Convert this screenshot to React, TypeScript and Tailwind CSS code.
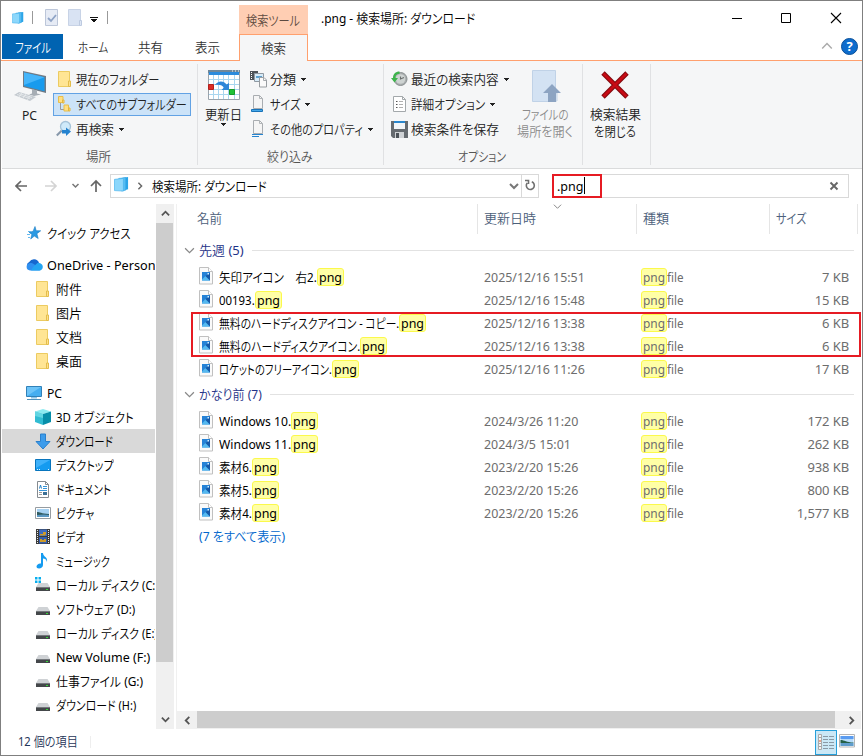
import { useLayoutEffect, useRef, useState } from 'react';
import type { ReactNode } from 'react';

interface FitProps {
    w: number;
    children: string;
    className?: string;
}

// Condenses a label horizontally so that it fills exactly w pixels
function Fit({ w, children, className = '' }: FitProps) {
    const ref = useRef<HTMLSpanElement>(null);
    const [scale, setScale] = useState(1);

    useLayoutEffect(() => {
        if (ref.current) setScale(w / ref.current.offsetWidth);
    }, [w, children]);

    return (
        <span className={`inline-block shrink-0 whitespace-pre text-left ${className}`} style={{ width: w }}>
            <span ref={ref} className="inline-block origin-left" style={{ transform: `scaleX(${scale})` }}>{children}</span>
        </span>
    );
}

function Caret({ className = '' }: { className?: string }) {
    return (
        <svg className={`shrink-0 ${className}`} width="5" height="3" viewBox="0 0 5 3" shapeRendering="crispEdges">
            <path d="M0 0h5v1H4v1H3v1H2V2H1V1H0z" fill="#222" />
        </svg>
    );
}

function Chevron({ dir, color = '#555', size = 9, width = 2 }: { dir: 'up' | 'down' | 'left' | 'right'; color?: string; size?: number; width?: number }) {
    const paths = { up: 'M1 7l4-4 4 4', down: 'M1 3l4 4 4-4', left: 'M7 1L3 5l4 4', right: 'M3 1l4 4-4 4' };
    return (
        <svg className="shrink-0" width={size} height={size} viewBox="0 0 10 10" fill="none">
            <path d={paths[dir]} stroke={color} strokeWidth={width} />
        </svg>
    );
}

/* ---------- icons ---------- */

const FolderIcon = () => (
    <svg width="16" height="18" viewBox="0 0 16 18" className="shrink-0">
        <path d="M1.500 1.500h11v15h-11z" fill="#ffe594" stroke="#eccb61" />
        <path d="M11.500 11h2v5.500h-2z" fill="#ffe08a" stroke="#e3bd4c" />
    </svg>
);

const SubfolderIcon = () => (
    <svg width="16" height="18" viewBox="0 0 16 18" className="shrink-0">
        <path d="M3.500 8v6.500H7" fill="none" stroke="#9a9a9a" />
        <path d="M1.500 1.500h4.500v6h-4.500zM7 10h4.500v6H7z" fill="#ffdf82" stroke="#e7bd4a" />
        <path d="M5.500 5h1.500v3H5.500zM11.500 13h1.500v3h-1.500z" fill="#ffe08a" stroke="#e3b53c" />
    </svg>
);

const SearchAgainIcon = () => (
    <svg width="18" height="18" viewBox="0 0 18 18" className="shrink-0">
        <path d="M5.800 10.500L.800 15.500" stroke="#8798aa" strokeWidth="2" />
        <circle cx="9.500" cy="6.500" r="5" fill="#cfeafa" stroke="#a5c3d9" strokeWidth="1.300" />
        <path d="M6 10h4V7.500l5 4-5 4.500v-2.500H6z" fill="#2583d0" />
    </svg>
);

const PcBigIcon = () => (
    <svg width="32" height="32" viewBox="0 0 32 32">
        <path d="M9 1l23 5v17L9 17z" fill="#707b86" />
        <path d="M10 2.500l20.500 4.700v14L10 16z" fill="#189bee" />
        <path d="M10 2.500l20.500 4.700L10 15z" fill="#45b5fa" />
        <path d="M18 19l5 1.500v3l4 1-7 1.500-5-1.500 3-1z" fill="#a6adb4" />
        <path d="M5 22l17 5-6 4L0 25z" fill="#c3c9cf" />
        <path d="M5 23.500l13 4M3 24.500l13 4M8 23l-3 4M12 24l-3 4M16 26l-3 4" stroke="#eef0f2" strokeWidth=".7" />
    </svg>
);

const CalendarIcon = () => (
    <svg width="32" height="30" viewBox="0 0 32 30">
        <path d="M.5.500h31v29H.500z" fill="#fff" stroke="#9aa3ab" />
        <path d="M0 0h32v3H0z" fill="#6f8799" />
        <path d="M1 2h30v3H1z" fill="#2b8bdc" />
        <path d="M24 1h1M27 1h1M30 1h1" stroke="#fff" />
        <path d="M5.500 5v24M10.500 5v24M15.500 5v24M20.500 5v24M26.500 5v24M1 9.500h30M1 14.500h30M1 19.500h30M1 24.500h30" stroke="#a9d6ef" />
        <path d="M.500 14.500h5v5h-5z" fill="#dd2b25" stroke="#b3201c" />
        <path d="M21.500 19.500h5v5h-5z" fill="#1fc236" stroke="#179a2b" />
        <path d="M7 15c3-5 9-4.500 11.500-.5l2.500-1.500v7h-7.500l2.500-2.500c-2.500-3-5.500-3-9-2.500z" fill="#2e86d8" />
    </svg>
);

const KindIcon = () => (
    <svg width="18" height="18" viewBox="0 0 18 18" className="shrink-0">
        <path d="M0 1h8v9H0z" fill="#4d5359" />
        <path d="M1 2.500h1M1 4.500h1M1 6.500h1M1 8.500h1" stroke="#fff" />
        <path d="M4.500 3.500h9v8h-9z" fill="#d7ebf8" stroke="#8f99a2" />
        <path d="M6 6h6v2H6z" fill="#5b9fce" />
        <path d="M9.500 7.500H14l2.500 2.500v7h-7z" fill="#fafafa" stroke="#989da1" />
        <path d="M13.500 7.500v3h3" fill="none" stroke="#a5a9ad" />
    </svg>
);

const PageIcon = ({ lines }: { lines?: boolean }) => (
    <svg width="14" height="18" viewBox="0 0 14 18" className="shrink-0">
        <path d="M2.500.500h6L11.500 3.500v10h-9z" fill="#f5f5f5" stroke="#a9adb1" />
        <path d="M8.500.500V3.500h3" fill="none" stroke="#b1b5b8" />
        {lines
            ? <path d="M1 14.500h11M1 16.500h7" stroke="#2684cf" />
            : <path d="M.500 14.500h11v2H.500z" fill="#47a8e8" stroke="#1872b8" />}
    </svg>
);

const RecentIcon = () => (
    <svg width="18" height="16" viewBox="0 0 18 16" className="shrink-0">
        <circle cx="9.500" cy="8" r="6.500" fill="#a9adae" stroke="#8a9091" />
        <circle cx="9.500" cy="8" r="4.800" fill="#ced3d2" />
        <path d="M9.500 5.500V8l3.500-1.500" fill="none" stroke="#6a6e6e" strokeWidth="1.100" />
        <path d="M8.500 3C5 3 4.500 5 4.500 7H7l-3.500 4.500L0 7h2C2 3 4.500.500 8.500.500z" fill="#3db34b" />
    </svg>
);

const AdvancedIcon = () => (
    <svg width="14" height="18" viewBox="0 0 14 18" className="shrink-0">
        <path d="M.500 1.500h9l3 3v12H.500z" fill="#fff" stroke="#a3a8ab" />
        <path d="M9.500 1.500v3h3" fill="none" stroke="#a3a8ab" />
        <path d="M3 6.500h1.500M3 9.500h1.500M3 12.500h1.500" stroke="#555" strokeWidth="1.200" />
        <path d="M6 6.500h4M6 9.500h4M6 12.500h4" stroke="#b0b0b0" />
    </svg>
);

const SaveIcon = () => (
    <svg width="17" height="18" viewBox="0 0 17 18" className="shrink-0">
        <path d="M0 1h17v17H2l-2-2z" fill="#666b70" />
        <path d="M3 1h11v8H3z" fill="#f2f5f8" />
        <path d="M3 1h11v2H3z" fill="#2b87cd" />
        <path d="M4 12h9v6H4z" fill="#cfd2d5" />
        <path d="M5 13h3v5H5z" fill="#4d5359" />
    </svg>
);

const OpenLocationIcon = () => (
    <svg width="30" height="34" viewBox="0 0 30 34">
        <path d="M1.500.500h23v31h-23z" fill="#d3e2f3" stroke="#c0d2e7" />
        <path d="M22 23h4v8h-4z" fill="#dbe7f5" stroke="#c4d3e6" />
        <path d="M21 14l9 9h-5v9h-8v-9h-5z" fill="#8da4c2" />
    </svg>
);

const RedCrossIcon = () => (
    <svg width="28" height="28" viewBox="0 0 28 28">
        <path d="M2 2l24 24M26 2L2 26" stroke="#7f0a0d" strokeWidth="4.800" />
        <path d="M2.500 2.500l23 23M25.500 2.500l-23 23" stroke="#c70a14" strokeWidth="2.800" />
    </svg>
);

const StackIcon = ({ size = 16 }: { size?: number }) => (
    <svg width={size} height={size} viewBox="0 0 16 16" className="shrink-0">
        <path d="M8 1l7-1v13l-5 1.500z" fill="#2ba5e8" />
        <path d="M5 1.500L12.500.500V14L8 15z" fill="#55bdf3" stroke="#2ba0e2" strokeWidth=".5" />
        <path d="M.500 2.500L10 1.500V15l-9.500-.5z" fill="#8cd7fb" stroke="#43b1ed" strokeWidth=".7" />
    </svg>
);

const StarIcon = () => (
    <svg width="16" height="16" viewBox="0 0 16 16" className="shrink-0">
        <path d="M9 1.500l1.200 4.200 4.500.1-3.800 2.900 1.300 4.800-3.900-2.400L4.700 14l1.200-4.500L3 7.200l4-.8z" fill="#2b99e2" stroke="#1b7cc2" strokeWidth=".6" />
        <path d="M2 6.500h3M1 9.500h3M2 12.500h2" stroke="#65b9ee" strokeWidth="1.200" />
    </svg>
);

const CloudIcon = () => (
    <svg width="17" height="14" viewBox="0 0 17 14" className="shrink-0">
        <path d="M4 11.500A4 4 0 0 1 3.200 4 5.500 5.500 0 0 1 13 4.500l-7 7z" fill="#1668cf" />
        <path d="M4 12.500a3.700 3.700 0 0 1-.5-7.300C6 4.500 8 6 15 11.500c-.5.700-1.500 1-2 1z" fill="#2e8ff0" />
        <path d="M7.500 8.500l4-3.500c3-.5 5.500 1.500 5.300 4-.1 2-1.500 3.500-3.500 3.500H5z" fill="#24a5f2" />
    </svg>
);

const PcIcon = () => (
    <svg width="16" height="16" viewBox="0 0 16 16" className="shrink-0">
        <path d="M.500 1.500h15v10H.500z" fill="#6dc4f8" stroke="#3181b8" />
        <path d="M1 11L15 2v9z" fill="#45aef0" />
        <path d="M5 12h6v1.500H5z" fill="#8cc6e8" />
        <path d="M1 14.500h14" stroke="#4f91bb" />
    </svg>
);

const CubeIcon = () => (
    <svg width="16" height="16" viewBox="0 0 16 16" className="shrink-0">
        <path d="M0 2.500L8 0l8 2.500L8 5z" fill="#8ceaf0" />
        <path d="M0 2.500L8 5v11l-8-3z" fill="#31bcd2" />
        <path d="M16 2.500L8 5v11l8-3z" fill="#078ea9" />
        <path d="M0 2.500L8 5v4L0 7z" fill="#61d5e2" />
    </svg>
);

const DownloadIcon = () => (
    <svg width="16" height="17" viewBox="0 0 16 17" className="shrink-0">
        <path d="M5.500 1h5v7.500h4.500L8 16 1 8.500h4.500z" fill="#3d9ceb" stroke="#2b80cc" />
    </svg>
);

const DesktopIcon = () => (
    <svg width="16" height="14" viewBox="0 0 16 14" className="shrink-0">
        <path d="M.500 1.500h15v11H.500z" fill="#159bf0" stroke="#0875bd" />
        <path d="M1 2h14L1 10z" fill="#3fb1fa" />
        <path d="M2 11.500h1M4 11.500h1M13 11.500h1" stroke="#d8f0ff" />
    </svg>
);

const DocumentIcon = () => (
    <svg width="16" height="17" viewBox="0 0 16 17" className="shrink-0">
        <path d="M2.500.500h8L13.500 3.500v13h-11z" fill="#fff" stroke="#858b90" />
        <path d="M10.500.500v3h3" fill="none" stroke="#858b90" />
        <path d="M8 5.500h4M8 7.500h4M4 9.500h8" stroke="#3694d8" />
        <path d="M4.500 7.500L5.500 4l1 3.500" fill="none" stroke="#2180c6" />
        <path d="M4 11.500h3M4 13.500h3" stroke="#999" />
        <path d="M8 11h4v3H8z" fill="#3c6f94" />
    </svg>
);

const PictureIcon = () => (
    <svg width="16" height="14" viewBox="0 0 16 14" className="shrink-0">
        <path d="M.500 1.500h15v11H.500z" fill="#fff" stroke="#969ca1" />
        <path d="M2 3h12v8H2z" fill="#a6d1f2" />
        <path d="M2 6c3 0 4 1.500 12 2v1.500H2z" fill="#2f5a5e" />
        <path d="M2 9c4-.5 8-1 12 0v2H2z" fill="#5b97c2" />
    </svg>
);

const VideoIcon = () => (
    <svg width="16" height="16" viewBox="0 0 16 16" className="shrink-0">
        <path d="M1 0h14v15H1z" fill="#3c3c3c" />
        <path d="M2.500 1v14M13.500 1v14" stroke="#e9e9e9" strokeDasharray="1 1" />
        <path d="M4 .500h8V7H4z" fill="#3d6cc2" />
        <path d="M4 8h8v6.500H4z" fill="#345eb0" />
        <path d="M5 5h3V3h3v2l-1 1.500H5zM5 13V10h2v1h2v-1h2v3z" fill="#cf9b2a" />
    </svg>
);

const MusicIcon = () => (
    <svg width="16" height="16" viewBox="0 0 16 16" className="shrink-0">
        <path d="M6 0h2c0 4 5 3.500 4 9-.5-2.500-2-3.500-4-3.500V12c0 2-2 3.500-4 3.500-1.700 0-2.500-1-2.500-2 0-2 2.500-3.500 4.500-3z" fill="#159bf0" />
    </svg>
);

const DriveIcon = ({ win }: { win?: boolean }) => (
    <svg width="16" height="16" viewBox="0 0 16 16" className="shrink-0">
        <path d="M3.500 6h9l2.500 4H1z" fill="#cfd2d5" />
        <path d="M1 10h14v4H1z" fill="#44474a" />
        <path d="M1 10.500h14" stroke="#73777b" />
        <path d="M11 12.500h2" stroke="#35d838" />
        {win && <path d="M0 0h2.500v2.500H0zM3.500 0H6v2.500H3.500zM0 3.500h2.500V6H0zM3.500 3.500H6V6H3.500z" fill="#08aeee" />}
    </svg>
);

const PngIcon = () => (
    <svg width="14" height="18" viewBox="0 0 14 18" className="shrink-0">
        <path d="M.500.500h9l4 4v12.500H.500z" fill="#fafafa" stroke="#c0c0c0" />
        <path d="M9.500.500v4h4" fill="#fff" stroke="#c0c0c0" />
        <path d="M3 5h8v8.500H3z" fill="#2582d6" />
        <path d="M3 12.500L6.500 9l4.500 4.500H3z" fill="#55b9f0" />
        <path d="M6.500 9L11 6v7.500z" fill="#1659a8" />
        <path d="M8.500 6h1.500v1.500H8.500z" fill="#d5efff" />
    </svg>
);

/* ---------- title bar and tabs ---------- */

function TitleBar() {
    return (
        <div className="flex h-[33px] shrink-0">
            <div className="flex w-[238px] items-center">
                <span className="ml-[11px] flex"><StackIcon size={12} /></span>
                <span className="ml-[8px] h-[13px] w-px bg-[#999]" />
                <svg className="ml-[12px]" width="14" height="17" viewBox="0 0 14 17">
                    <path d="M.500.500h12v16H.500z" fill="#e6ebf5" stroke="#bcc6d9" />
                    <path d="M3 9l3 3 5-6" fill="none" stroke="#8ea3c6" strokeWidth="1.800" />
                </svg>
                <svg className="ml-[9px]" width="15" height="17" viewBox="0 0 15 17">
                    <path d="M.500.500h12v16H.500z" fill="#d9e3f3" stroke="#c8d3e6" />
                    <path d="M11.500 11.500h2v5h-2z" fill="#dde6f4" stroke="#bdcae0" />
                </svg>
                <svg className="ml-[7px] mt-[4px]" width="8" height="6" viewBox="0 0 8 6" shapeRendering="crispEdges">
                    <path d="M0 0h8v1H0zM1 2h6v1H6v1H5v1H3V4H2V3H1z" fill="#111" />
                </svg>
                <span className="ml-[9px] h-[13px] w-px bg-[#999]" />
            </div>
            <div className="mt-[4px] flex w-[69px] items-center justify-center bg-[#ffceb3] pr-px text-[#5c4a40]">
                <Fit w={54}>検索ツール</Fit>
            </div>
            <div className="flex flex-1 items-center pl-[13px] text-black">
                <Fit w={154}>.png - 検索場所: ダウンロード</Fit>
            </div>
            <div className="flex items-center pr-[20px]">
                <svg width="110" height="12" viewBox="0 0 110 12" fill="none" stroke="#000">
                    <path d="M0 6.500h10M49.500 1.500h9v9h-9z" />
                    <path d="M99 1l10 10M109 1L99 11" strokeWidth="1.100" />
                </svg>
            </div>
        </div>
    );
}

function Tabs() {
    return (
        <div className="flex h-[27px] shrink-0 text-[#333]">
            <div className="flex w-[238px] border-b border-[#ffa06e] pl-px">
                <div className="flex h-[25px] w-[61px] items-center justify-center bg-[#0063b1] text-white"><Fit w={36}>ファイル</Fit></div>
                <div className="flex h-[25px] w-[176px] items-center pl-[15px]">
                    <Fit w={30}>ホーム</Fit>
                    <Fit w={25} className="ml-[30px]">共有</Fit>
                    <Fit w={25} className="ml-[32px]">表示</Fit>
                </div>
            </div>
            <div className="flex w-[69px] items-center justify-center border-x border-t border-[#ffa06e] bg-[#f5f6f7] pb-px">
                <Fit w={25}>検索</Fit>
            </div>
            <div className="flex flex-1 items-center justify-end gap-[8px] border-b border-[#ffa06e] pb-[2px] pr-[4px]">
                <Chevron dir="up" color="#aaa" size={12} width={1.2} />
                <span className="flex h-[17px] w-[17px] items-center justify-center rounded-full border border-[#0a4f98] bg-[#0d6ccd] text-[13px] font-bold leading-none text-white">?</span>
            </div>
        </div>
    );
}

/* ---------- ribbon ---------- */

function RibbonGroup({ className, label, labelWidth, children }: { className: string; label?: string; labelWidth?: number; children: ReactNode }) {
    return (
        <div className={`mt-[3px] flex h-[101px] shrink-0 flex-col border-r border-[#e0e1e3] ${className}`}>
            <div className="flex h-[84px]">{children}</div>
            {label && <div className="flex h-[18px] items-center justify-center pr-[2px] text-[#555]"><Fit w={labelWidth ?? 0}>{label}</Fit></div>}
        </div>
    );
}

interface SmallButtonProps {
    icon: ReactNode;
    label: string;
    w: number;
    caret?: boolean;
    iconBox?: string;
    active?: boolean;
}

function SmallButton({ icon, label, w, caret, iconBox = 'w-[20px]', active }: SmallButtonProps) {
    return (
        <div className={`flex h-[23px] items-center border ${active ? 'border-[#62a2e4] bg-[#cce3f8]' : 'border-transparent'}`}>
            <span className={`-mt-px flex shrink-0 justify-start ${iconBox}`}>{icon}</span>
            <Fit w={w} className="-mt-px">{label}</Fit>
            {caret && <Caret className="ml-[5px]" />}
        </div>
    );
}

function Ribbon() {
    return (
        <div className="ml-px flex h-[108px] shrink-0 border-b border-[#dadbdc] bg-[#f5f6f7] text-[#222]">
            <RibbonGroup className="w-[196px]" label="場所" labelWidth={25}>
                <div className="flex w-[51px] flex-col items-center pl-[4px] pt-[6px]">
                    <PcBigIcon />
                    <span className="mt-[4px]"><Fit w={15}>PC</Fit></span>
                </div>
                <div className="flex w-[138px] flex-col gap-[2px] pt-[4px]">
                    <SmallButton icon={<FolderIcon />} label="現在のフォルダー" w={83} iconBox="w-[22px] pl-[3px]" />
                    <SmallButton icon={<SubfolderIcon />} label="すべてのサブフォルダー" w={111} iconBox="w-[22px] pl-[3px]" active />
                    <SmallButton icon={<SearchAgainIcon />} label="再検索" w={38} iconBox="w-[22px] pl-[2px]" caret />
                </div>
            </RibbonGroup>
            <RibbonGroup className="w-[186px]" label="絞り込み" labelWidth={46}>
                <div className="flex w-[51px] flex-col items-center pt-[6px]">
                    <CalendarIcon />
                    <span className="mt-[5px] h-[18px] pr-px"><Fit w={37}>更新日</Fit></span>
                    <Caret />
                </div>
                <div className="flex flex-col gap-[2px] pt-[4px]">
                    <SmallButton icon={<KindIcon />} label="分類" w={26} caret />
                    <SmallButton icon={<PageIcon />} label="サイズ" w={30} iconBox="w-[20px] pl-[1px]" caret />
                    <SmallButton icon={<PageIcon lines />} label="その他のプロパティ" w={93} iconBox="w-[20px] pl-[1px]" caret />
                </div>
            </RibbonGroup>
            <RibbonGroup className="w-[199px]" label="オプション" labelWidth={48}>
                <div className="flex w-[130px] flex-col gap-[2px] pl-[6px] pt-[4px]">
                    <SmallButton icon={<RecentIcon />} label="最近の検索内容" w={88} caret />
                    <SmallButton icon={<AdvancedIcon />} label="詳細オプション" w={74} iconBox="w-[20px] pl-[2px]" caret />
                    <SmallButton icon={<SaveIcon />} label="検索条件を保存" w={88} />
                </div>
                <div className="flex w-[62px] flex-col items-center pt-[6px] leading-[17px] text-[#8b8b8b]">
                    <span className="pl-[2px]"><OpenLocationIcon /></span>
                    <Fit w={47} className="mt-[2px]">ファイルの</Fit>
                    <Fit w={56}>場所を開く</Fit>
                </div>
            </RibbonGroup>
            <RibbonGroup className="w-[68px]">
                <div className="flex w-full flex-col items-center pr-[3px] pt-[7px] leading-[17px]">
                    <RedCrossIcon />
                    <Fit w={51} className="mt-[7px]">検索結果</Fit>
                    <Fit w={42}>を閉じる</Fit>
                </div>
            </RibbonGroup>
        </div>
    );
}

/* ---------- address bar ---------- */

function AddressBar() {
    return (
        <div className="flex h-[35px] shrink-0 items-center pb-[2px] text-black">
            <svg className="ml-[14px]" width="90" height="14" viewBox="0 0 90 14" fill="none" strokeWidth="1.700">
                <path d="M12 7H1M6 2L1 7l5 5" stroke="#666" />
                <path d="M30 7h11M36 2l5 5-5 5" stroke="#d4d4d4" />
                <path d="M57.500 5l3 3 3-3" stroke="#777" strokeWidth="1.500" />
                <path d="M81 13V2M76 7l5-5 5 5" stroke="#666" />
            </svg>
            <div className="ml-[5px] flex h-[24px] w-[429px] items-center border border-[#d9d9d9] pl-[3px]">
                <span className="-mt-[3px] flex"><StackIcon size={15} /></span>
                <span className="ml-[7px] flex"><Chevron dir="right" color="#666" size={8} width={1.8} /></span>
                <Fit w={115} className="ml-[8px]">検索場所: ダウンロード</Fit>
                <span className="ml-auto flex h-full w-[15px] items-center justify-center"><Chevron dir="down" color="#777" size={10} /></span>
                <span className="flex h-full w-[17px] items-center justify-center border-l border-[#d9d9d9]">
                    <svg width="12" height="13" viewBox="0 0 12 13" fill="none" stroke="#707070" strokeWidth="1.600">
                        <path d="M7.800 2.800A4 4 0 1 1 3.200 4M1 1.500h3.500V5" />
                    </svg>
                </span>
            </div>
            <div className="ml-[13px] flex h-[24px] w-[297px] items-center justify-between border border-[#d9d9d9] pr-[9px]">
                <div className="-ml-px flex h-[24px] w-[50px] items-center border-2 border-[#e61b23] pl-[3px]">
                    <Fit w={27}>.png</Fit>
                    <span className="h-[17px] w-px bg-black" />
                </div>
                <svg width="10" height="10" viewBox="0 0 10 10"><path d="M1.500 1.500l7 7M8.500 1.500l-7 7" stroke="#666" strokeWidth="1.900" /></svg>
            </div>
        </div>
    );
}

/* ---------- navigation pane ---------- */

interface NavItem {
    label: string;
    w: number;
    icon: ReactNode;
    top?: boolean;
    gap?: boolean;
    selected?: boolean;
}

const NAV: NavItem[] = [
    { label: 'クイック アクセス', w: 84, icon: <StarIcon />, top: true },
    { label: 'OneDrive - Personal', w: 119, icon: <CloudIcon />, top: true, gap: true },
    { label: '附件', w: 26, icon: <FolderIcon /> },
    { label: '图片', w: 26, icon: <FolderIcon /> },
    { label: '文档', w: 26, icon: <FolderIcon /> },
    { label: '桌面', w: 26, icon: <FolderIcon /> },
    { label: 'PC', w: 15, icon: <PcIcon />, top: true, gap: true },
    { label: '3D オブジェクト', w: 78, icon: <CubeIcon /> },
    { label: 'ダウンロード', w: 57, icon: <DownloadIcon />, selected: true },
    { label: 'デスクトップ', w: 58, icon: <DesktopIcon /> },
    { label: 'ドキュメント', w: 55, icon: <DocumentIcon /> },
    { label: 'ピクチャ', w: 38, icon: <PictureIcon /> },
    { label: 'ビデオ', w: 29, icon: <VideoIcon /> },
    { label: 'ミュージック', w: 54, icon: <MusicIcon /> },
    { label: 'ローカル ディスク (C:)', w: 103, icon: <DriveIcon win /> },
    { label: 'ソフトウェア (D:)', w: 79, icon: <DriveIcon /> },
    { label: 'ローカル ディスク (E:)', w: 102, icon: <DriveIcon /> },
    { label: 'New Volume (F:)', w: 94, icon: <DriveIcon /> },
    { label: '仕事ファイル (G:)', w: 87, icon: <DriveIcon /> },
    { label: 'ダウンロード (H:)', w: 80, icon: <DriveIcon /> },
];

function NavPane() {
    return (
        <div className="flex w-[176px] shrink-0 border-r border-[#f0f0f0]">
            <div className="w-[154px] overflow-hidden pl-px pt-[17px] text-black">
                {NAV.map((item, i) => (
                    <div
                        key={i}
                        className={`flex h-[24px] items-center ${item.gap ? 'mt-[8px]' : ''} ${item.top ? 'pl-[24px]' : 'pl-[33px]'} ${item.selected ? 'bg-[#d9d9d9]' : ''}`}
                    >
                        <span className="flex w-[21px] shrink-0">{item.icon}</span>
                        <Fit w={item.w} className="-mt-px">{item.label}</Fit>
                    </div>
                ))}
            </div>
            <div className="ml-px flex w-[18px] flex-col bg-[#f0f0f0]">
                <span className="flex h-[19px] items-center justify-center"><Chevron dir="up" /></span>
                <span className="mr-px h-[439px] bg-[#cdcdcd]" />
                <span className="mt-auto flex h-[19px] items-center justify-center"><Chevron dir="down" /></span>
            </div>
        </div>
    );
}

/* ---------- file list ---------- */

interface FileRow {
    stem: string;
    w: number;
    date: string;
    dateWidth: number;
    size: string;
}

const LAST_WEEK: FileRow[] = [
    { stem: '矢印アイコン　右2.', w: 98, date: '2025/12/16 15:51', dateWidth: 101, size: '7 KB' },
    { stem: '00193.', w: 36, date: '2025/12/16 15:48', dateWidth: 101, size: '15 KB' },
    { stem: '無料のハードディスクアイコン - コピー.', w: 180, date: '2025/12/16 13:38', dateWidth: 101, size: '6 KB' },
    { stem: '無料のハードディスクアイコン.', w: 141, date: '2025/12/16 13:38', dateWidth: 101, size: '6 KB' },
    { stem: 'ロケットのフリーアイコン.', w: 113, date: '2025/12/16 11:26', dateWidth: 101, size: '17 KB' },
];

const OLDER: FileRow[] = [
    { stem: 'Windows 10.', w: 72, date: '2024/3/26 11:20', dateWidth: 94, size: '172 KB' },
    { stem: 'Windows 11.', w: 72, date: '2024/3/5 15:01', dateWidth: 87, size: '262 KB' },
    { stem: '素材6.', w: 33, date: '2023/2/20 15:26', dateWidth: 94, size: '938 KB' },
    { stem: '素材5.', w: 33, date: '2023/2/20 15:26', dateWidth: 94, size: '800 KB' },
    { stem: '素材4.', w: 33, date: '2023/2/20 15:26', dateWidth: 94, size: '1,577 KB' },
];

function Match({ w = 23 }: { w?: number }) {
    return (
        <span className="flex h-[18px] items-center rounded-[3px] border border-[#fbf94c] bg-[#ffffa6] px-px">
            <Fit w={w}>png</Fit>
        </span>
    );
}

function Row({ file }: { file: FileRow }) {
    return (
        <div className="flex h-[23px] items-center text-[#6d6d6d]">
            <div className="flex w-[285px] items-center text-black">
                <span className="-mt-[2px] flex"><PngIcon /></span>
                <Fit w={file.w} className="ml-[6px]">{file.stem}</Fit>
                <Match />
            </div>
            <div className="w-[157px]"><Fit w={file.dateWidth}>{file.date}</Fit></div>
            <div className="flex flex-1 items-center">
                <Match w={22} />
                <Fit w={17}>file</Fit>
            </div>
            <span className="pr-[13px] tracking-[-0.1px]">{file.size}</span>
        </div>
    );
}

function GroupHeader({ label, w }: { label: string; w: number }) {
    return (
        <div className="flex h-[26px] items-center text-[#1e3287]">
            <span className="-ml-[15px] mr-[4px] flex"><Chevron dir="down" color="#888" size={11} width={1.1} /></span>
            <Fit w={w}>{label}</Fit>
            <span className="ml-[8px] mr-[8px] h-px flex-1 bg-[#e2e2e2]" />
        </div>
    );
}

function FileList() {
    return (
        <div className="relative flex min-w-0 flex-1 flex-col">
            <div className="flex h-[30px] shrink-0 items-center text-[#4c607a]">
                <div className="flex h-full w-[301px] items-center border-r border-[#e5e5e5] pb-[2px] pl-[20px]"><Fit w={25}>名前</Fit></div>
                <div className="relative flex h-full w-[159px] items-center border-r border-[#e5e5e5] pb-[2px] pl-[6px]">
                    <Fit w={52}>更新日時</Fit>
                    <span className="absolute -top-[2px] left-[75px]"><Chevron dir="down" color="#888" size={9} width={1.1} /></span>
                </div>
                <div className="flex h-full w-[133px] items-center border-r border-[#e5e5e5] pb-[2px] pl-[6px]"><Fit w={26}>種類</Fit></div>
                <div className="flex h-full w-[88px] items-center border-r border-[#e5e5e5] pb-[2px] pl-[6px]"><Fit w={30}>サイズ</Fit></div>
            </div>
            <div className="flex-1 pl-[22px] pt-[3px]">
                <GroupHeader label="先週 (5)" w={45} />
                <div className="mt-[2px]">{LAST_WEEK.map((f, i) => <Row key={i} file={f} />)}</div>
                <div className="mt-px"><GroupHeader label="かなり前 (7)" w={63} /></div>
                <div className="mt-[2px]">{OLDER.map((f, i) => <Row key={i} file={f} />)}</div>
                <div className="flex h-[23px] items-center text-[#0066cc]"><Fit w={86}>(7 をすべて表示)</Fit></div>
            </div>
            <div className="mr-[1px] flex h-[18px] shrink-0 bg-[#f0f0f0] pl-px">
                <span className="flex w-[19px] items-center justify-center"><Chevron dir="left" /></span>
                <span className="mb-px w-[638px] bg-[#cdcdcd]" />
                <span className="flex flex-1 items-center justify-center pl-[7px]"><Chevron dir="right" /></span>
            </div>
            {/* callout over the two highlighted rows */}
            <div className="pointer-events-none absolute left-[14px] top-[108px] h-[45px] w-[670px] border-2 border-[#e61b23]" />
        </div>
    );
}

function StatusBar() {
    return (
        <div className="flex flex-1 items-center pl-[17px] text-[#1f3558]">
            <Fit w={60} className="-mt-[2px]">12 個の項目</Fit>
            <span className="ml-[12px] h-[12px] w-px bg-[#eee]" />
            <div className="ml-auto flex h-full items-center gap-[2px] pr-[6px]">
                <span className="flex h-[25px] w-[22px] items-center justify-center border border-[#269fda] bg-[#cbe8f6]">
                    <svg width="16" height="16" viewBox="0 0 16 16" className="shrink-0">
                        <path d="M.500.500h3v15h-3z" fill="#f5f5f5" stroke="#aaa" />
                        <path d="M2 3v1M2 9v1M2 12v1" stroke="#555" />
                        <path d="M2 6v2" stroke="#d4542c" />
                        <path d="M5 2.500h5M11 2.500h5M5 5.500h5M11 5.500h5M5 8.500h5M11 8.500h5M5 11.500h5M11 11.500h5M5 14.500h5M11 14.500h5" stroke="#8a9aa6" />
                    </svg>
                </span>
                <svg width="17" height="14" viewBox="0 0 17 14" className="-mt-[2px]">
                    <path d="M.500.500h15v12.500H.500z" fill="#fff" stroke="#b5b5b5" />
                    <path d="M1.500 2h13v10h-13z" fill="#b5dafa" />
                    <path d="M1.500 2h13v3h-13z" fill="#5b9cf0" />
                    <path d="M1.500 6c4 0 6 2.500 13 2.500v.5h-13z" fill="#246047" />
                    <path d="M1.500 9h13v3h-13z" fill="#5f9ccb" />
                </svg>
            </div>
        </div>
    );
}

export default function App() {
    return (
        <div className="flex h-[756px] w-[863px] flex-col overflow-hidden border border-[#7f7f7f] bg-white font-['Noto_Sans','Noto_Sans_CJK_JP_DemiLight','Noto_Sans_CJK_JP_Light','Noto_Sans_CJK_JP','Noto_Sans_CJK_SC',sans-serif] text-[13px] leading-[18px] [font-feature-settings:'palt']">
            <TitleBar />
            <Tabs />
            <Ribbon />
            <AddressBar />
            <div className="flex h-[525px] shrink-0">
                <NavPane />
                <FileList />
            </div>
            <StatusBar />
        </div>
    );
}
